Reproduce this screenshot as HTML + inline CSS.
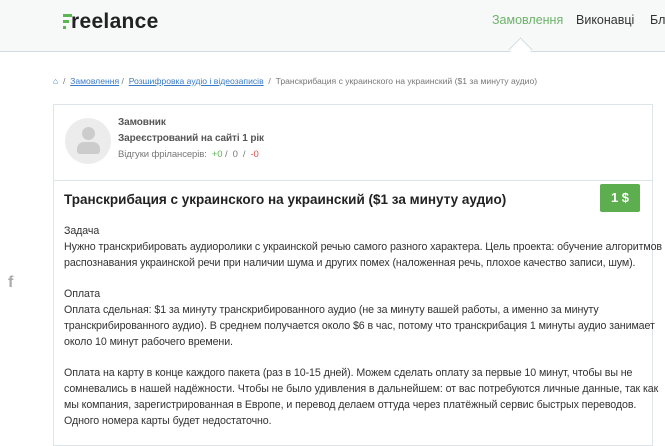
<!DOCTYPE html>
<html><head><meta charset="utf-8"><style>
body{margin:0;width:665px;height:440px;overflow:hidden;background:#fff;font-family:"Liberation Sans",sans-serif;color:#333;position:relative}
.hdr{position:absolute;left:0;top:0;width:665px;height:51px;background:#f7f8f8;border-bottom:1px solid #cfdde2}
.logo{position:absolute;left:63px;top:10px;font-size:21px;font-weight:bold;color:#222;letter-spacing:0.3px}
.nav{position:absolute;top:13px;font-size:12.5px;color:#333}
.notch{position:absolute;left:512px;top:41px;width:16px;height:16px;background:#fff;border-left:1px solid #cfdde2;border-top:1px solid #cfdde2;transform:rotate(45deg)}
.bc{position:absolute;left:53px;top:76px;font-size:8.6px;color:#777}
.bc a{color:#3a7bc8;text-decoration:underline}
.card{position:absolute;left:53px;top:104px;width:598px;height:340px;border:1px solid #dde5e8;background:#fff}
.av{position:absolute;left:11px;top:13px;width:46px;height:46px;border-radius:50%;background:#ececec}
.sep{position:absolute;left:0;top:75px;width:598px;border-top:1px solid #dde5e8}
.t{position:absolute;font-size:11.4px;line-height:16.3px;color:#333;letter-spacing:-0.1px;white-space:nowrap}
.body{transform:scaleX(0.935);transform-origin:0 0;line-height:15.8px}
</style></head><body>
<div class="hdr">
 <div class="logo"><span style="position:relative;display:inline-block;width:8px;height:16px;vertical-align:-2px"><i style="position:absolute;left:0;top:0;width:9px;height:3px;background:#5ab552"></i><i style="position:absolute;left:0;top:6px;width:6px;height:3px;background:#5ab552"></i><i style="position:absolute;left:0;top:12px;width:3px;height:3px;background:#5ab552"></i></span>reelance</div>
 <div class="nav" style="left:492px;color:#6db36a">Замовлення</div>
 <div class="nav" style="left:576px">Виконавці</div>
 <div class="nav" style="left:650px;width:15px;overflow:hidden">Бло</div>
 <div class="notch"></div>
</div>
<div class="bc"><span style="color:#3a7bc8">&#8962;</span> &nbsp;/&nbsp; <a>Замовлення</a> / &nbsp;<a>Розшифровка аудіо і відеозаписів</a> &nbsp;/&nbsp; Транскрибация с украинского на украинский ($1 за минуту аудио)</div>
<div style="position:absolute;left:8px;top:274px;font-size:16px;font-weight:bold;color:#aaa">f</div>
<div class="card">
 <div class="av"><div style="position:absolute;left:17px;top:9px;width:13px;height:13px;border-radius:50%;background:#ccc"></div><div style="position:absolute;left:12px;top:24px;width:23px;height:12px;border-radius:7px 7px 3px 3px;background:#ccc"></div></div>
 <div class="t" style="left:64px;top:10px;font-size:10px;font-weight:bold;color:#555">Замовник</div>
 <div class="t" style="left:64px;top:26px;font-size:10px;font-weight:bold;color:#555">Зареєстрований на сайті 1 рік</div>
 <div class="t" style="left:64px;top:42px;font-size:9.5px;color:#777">Відгуки фрілансерів: &nbsp;<span style="color:#5ab552">+0</span> / &nbsp;0 &nbsp;/ &nbsp;<span style="color:#e05050">-0</span></div>
 <div class="sep"></div>
 <div class="t" style="left:10px;top:87px;font-size:13.5px;font-weight:bold;color:#222;letter-spacing:0">Транскрибация с украинского на украинский ($1 за минуту аудио)</div>
 <div style="position:absolute;left:546px;top:79px;width:40px;height:28px;background:#5cae4e;border-radius:2px;color:#fff;font-weight:bold;font-size:13px;text-align:center;line-height:28px">1 $</div>
 <div class="t body" style="left:10px;top:119px">Задача<br>Нужно транскрибировать аудиоролики с украинской речью самого разного характера. Цель проекта: обучение алгоритмов<br>распознавания украинской речи при наличии шума и других помех (наложенная речь, плохое качество записи, шум).<br><br>Оплата<br>Оплата сдельная: $1 за минуту транскрибированного аудио (не за минуту вашей работы, а именно за минуту<br>транскрибированного аудио). В среднем получается около $6 в час, потому что транскрибация 1 минуты аудио занимает<br>около 10 минут рабочего времени.<br><br>Оплата на карту в конце каждого пакета (раз в 10-15 дней). Можем сделать оплату за первые 10 минут, чтобы вы не<br>сомневались в нашей надёжности. Чтобы не было удивления в дальнейшем: от вас потребуются личные данные, так как<br>мы компания, зарегистрированная в Европе, и перевод делаем оттуда через платёжный сервис быстрых переводов.<br>Одного номера карты будет недостаточно.</div>
</div>
</body></html>
